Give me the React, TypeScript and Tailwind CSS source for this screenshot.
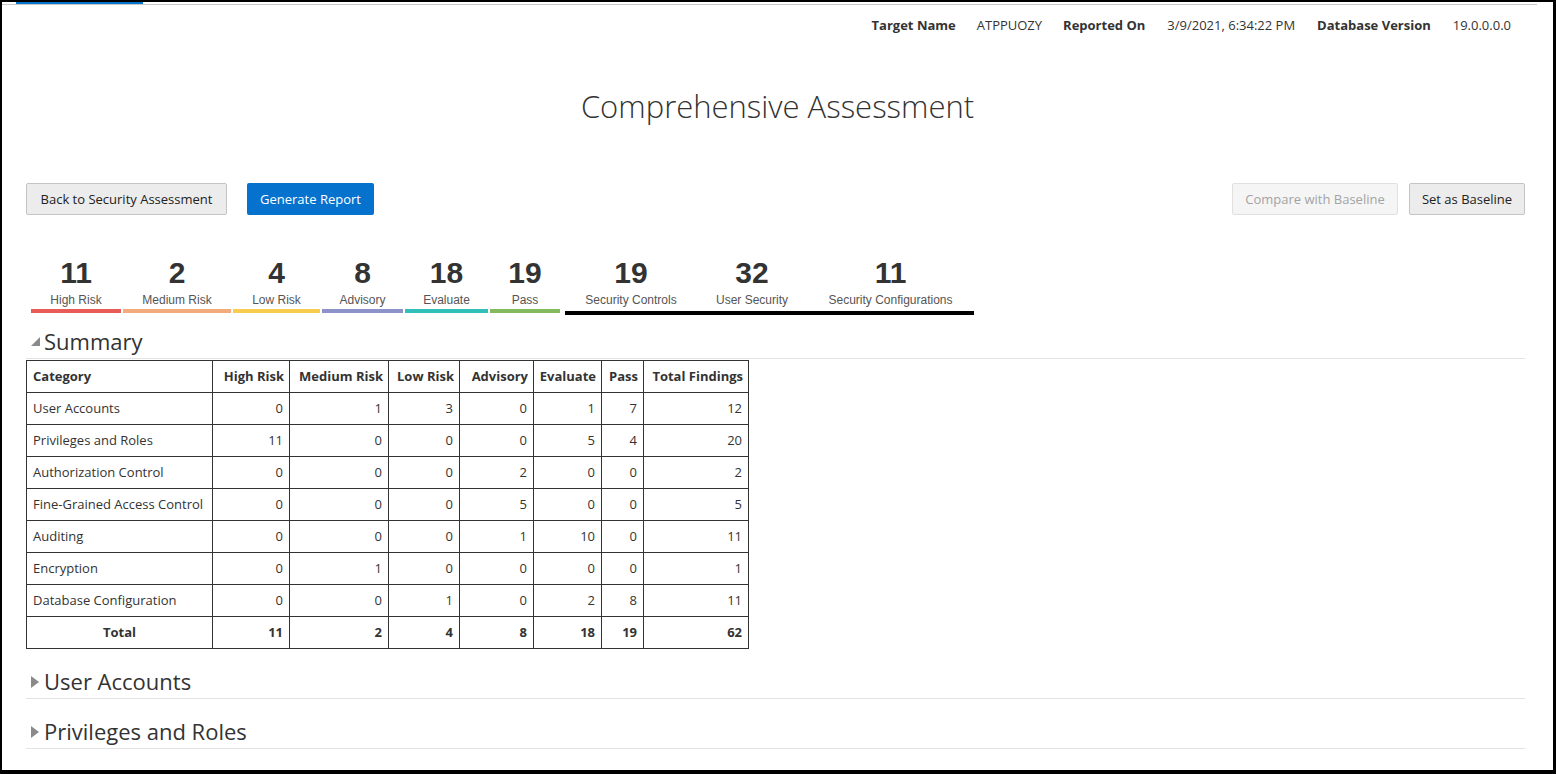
const font = { fontFamily: '"Open Sans", "Noto Sans", sans-serif' };

const stats = [
  { n: 11, label: "High Risk", w: "w-[90px]", bar: "bg-[#e85b58]" },
  { n: 2, label: "Medium Risk", w: "w-[108px]", bar: "bg-[#f4ab7b]" },
  { n: 4, label: "Low Risk", w: "w-[87px]", bar: "bg-[#f8cd4f]" },
  { n: 8, label: "Advisory", w: "w-[81px]", bar: "bg-[#8d93c8]" },
  { n: 18, label: "Evaluate", w: "w-[83px]", bar: "bg-[#33c0b9]" },
  { n: 19, label: "Pass", w: "w-[70px]", bar: "bg-[#84ba5d]" },
];

const groups = [
  { n: 19, label: "Security Controls", w: "w-[132px]" },
  { n: 32, label: "User Security", w: "w-[110px]" },
  { n: 11, label: "Security Configurations", w: "w-[167px]" },
];

const rows: [string, number[]][] = [
  ["User Accounts", [0, 1, 3, 0, 1, 7, 12]],
  ["Privileges and Roles", [11, 0, 0, 0, 5, 4, 20]],
  ["Authorization Control", [0, 0, 0, 2, 0, 0, 2]],
  ["Fine-Grained Access Control", [0, 0, 0, 5, 0, 0, 5]],
  ["Auditing", [0, 0, 0, 1, 10, 0, 11]],
  ["Encryption", [0, 1, 0, 0, 0, 0, 1]],
  ["Database Configuration", [0, 0, 1, 0, 2, 8, 11]],
];

const cols = [
  { h: "High Risk", w: "w-[77px]" },
  { h: "Medium Risk", w: "w-[99px]" },
  { h: "Low Risk", w: "w-[71px]" },
  { h: "Advisory", w: "w-[74px]" },
  { h: "Evaluate", w: "w-[68px]" },
  { h: "Pass", w: "w-[42px]" },
  { h: "Total Findings", w: "w-[105px]" },
];

const totals = [11, 2, 4, 8, 18, 19, 62];

function Stat({ n, label, w }: { n: number; label: string; w: string }) {
  return (
    <div className={`${w} flex flex-col items-center`}>
      <div
        className="h-[34px] text-[30px] leading-[34px] font-bold text-[#333]"
        style={{ fontFamily: '"Liberation Sans", Arial, sans-serif' }}
      >
        {n}
      </div>
      <div
        className="mt-[2px] h-[16px] text-[12px] leading-[16px] text-[#555]"
        style={{ fontFamily: '"Liberation Sans", Arial, sans-serif' }}
      >
        {label}
      </div>
    </div>
  );
}

function Section({ title, open }: { title: string; open?: boolean }) {
  return (
    <div className="flex h-[32px] items-center border-b border-[#e3e3e3] mr-[28px]">
      <div className="w-[18px] flex justify-center pb-[2px]">
        {open ? (
          <svg width="9" height="9" viewBox="0 0 9 9">
            <polygon points="9,0 9,9 0,9" fill="#8a8a8a" />
          </svg>
        ) : (
          <svg width="8" height="12" viewBox="0 0 8 12">
            <polygon points="0,0 8,6 0,12" fill="#8a8a8a" />
          </svg>
        )}
      </div>
      <div className="pb-[4px] text-[22px] leading-[30px] text-[#333]">{title}</div>
    </div>
  );
}

export default function App() {
  return (
    <div
      className="h-[774px] w-[1556px] overflow-hidden bg-white border-t-2 border-l-2 border-r-[3px] border-b-4 border-black text-[#333]"
      style={font}
    >
      {/* tab strip */}
      <div className="border-b border-[#c8c8c8] mr-[16px]">
        <div className="ml-[14px] w-[127px] h-[2px] bg-[#0572ce]" />
      </div>

      {/* report info */}
      <div className="mt-[10px] flex justify-end pr-[42px] text-[13px] leading-[20px] text-[#333]">
        <span className="font-bold">Target Name</span>
        <span className="ml-[21px]">ATPPUOZY</span>
        <span className="ml-[21px] font-bold">Reported On</span>
        <span className="ml-[22px]">3/9/2021, 6:34:22 PM</span>
        <span className="ml-[22px] font-bold">Database Version</span>
        <span className="ml-[22px]">19.0.0.0.0</span>
      </div>

      <h1 className="mt-[51px] text-center text-[31px] leading-[40px] font-light text-[#333]">
        Comprehensive Assessment
      </h1>

      {/* buttons */}
      <div className="mt-[57px] flex items-center pl-[24px] pr-[28px] text-[13px]">
        <button className="h-[32px] w-[201px] pt-[2px] rounded-[2px] border border-[#c4c4c4] bg-[#ececec] text-[#222]">
          Back to Security Assessment
        </button>
        <button className="ml-[20px] h-[32px] w-[127px] pt-[2px] rounded-[2px] bg-[#0572ce] text-white">
          Generate Report
        </button>
        <div className="flex-1" />
        <button className="h-[32px] w-[166px] pt-[2px] rounded-[2px] border border-[#e0e0e0] bg-[#f5f5f5] text-[#a3a3a3]">
          Compare with Baseline
        </button>
        <button className="ml-[11px] h-[32px] w-[116px] pt-[2px] rounded-[2px] border border-[#c4c4c4] bg-[#ececec] text-[#222]">
          Set as Baseline
        </button>
      </div>

      {/* counts */}
      <div className="mt-[41px] h-[59px] flex items-start pl-[29px]">
        {stats.map((s, i) => (
          <div key={s.label} className={i > 0 ? "ml-[2px]" : ""}>
            <Stat n={s.n} label={s.label} w={s.w} />
            <div className={`mt-[1px] h-[4px] ${s.bar}`} />
          </div>
        ))}
        <div className="ml-[5px]">
          <div className="flex">
            {groups.map((g) => (
              <Stat key={g.label} n={g.n} label={g.label} w={g.w} />
            ))}
          </div>
          <div className="mt-[3px] h-[4px] bg-black" />
        </div>
      </div>

      <div className="mt-[12px] pl-[24px]">
        <Section title="Summary" open />

        <table className="mt-[1px] border-collapse border border-[#333] text-[13px] text-[#333] table-fixed">
          <thead>
            <tr className="h-[32px]">
              <th className="w-[186px] border border-[#333] px-[6px] text-left font-bold">Category</th>
              {cols.map((c) => (
                <th key={c.h} className={`${c.w} border border-[#333] px-[5px] text-right font-bold whitespace-nowrap`}>
                  {c.h}
                </th>
              ))}
            </tr>
          </thead>
          <tbody>
            {rows.map(([name, vals]) => (
              <tr key={name} className="h-[32px]">
                <td className="border border-[#333] px-[6px] whitespace-nowrap">{name}</td>
                {vals.map((v, i) => (
                  <td key={i} className="border border-[#333] px-[6px] text-right">
                    {v}
                  </td>
                ))}
              </tr>
            ))}
            <tr className="h-[32px] font-bold">
              <td className="border border-[#333] px-[6px] text-center">Total</td>
              {totals.map((v, i) => (
                <td key={i} className="border border-[#333] px-[6px] text-right">
                  {v}
                </td>
              ))}
            </tr>
          </tbody>
        </table>

        <div className="mt-[18px]">
          <Section title="User Accounts" />
        </div>
        <div className="mt-[18px]">
          <Section title="Privileges and Roles" />
        </div>
      </div>
    </div>
  );
}
